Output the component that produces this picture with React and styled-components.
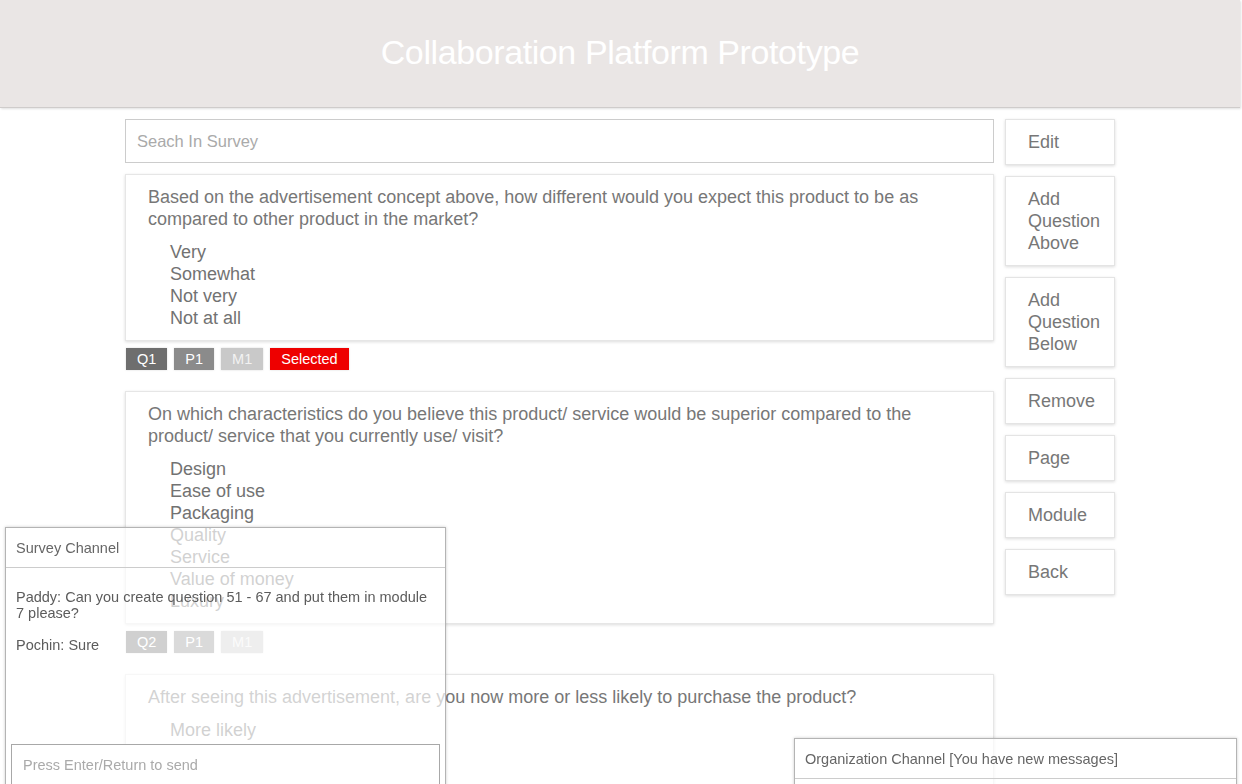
import React from 'react';
import styled, { createGlobalStyle } from 'styled-components';

const GlobalStyle = createGlobalStyle`
  html, body {
    margin: 0;
    padding: 0;
    overflow: hidden;
    background: #ffffff;
  }
  body {
    font-family: "Liberation Sans", Arial, sans-serif;
    color: #777777;
  }
  input::placeholder {
    color: #aaaaaa;
  }
`;

const Page = styled.div`
  width: 1240px;
  min-height: 784px;
`;

const Header = styled.header`
  height: 107px;
  background: #eae6e5;
  border-bottom: 1px solid #cfcccb;
  box-shadow: 1px 1px 2px rgba(0, 0, 0, 0.12);
  display: flex;
  align-items: center;
  justify-content: center;
`;

const Title = styled.h1`
  margin: 0 0 2px;
  font-size: 34px;
  font-weight: normal;
  color: #ffffff;
  letter-spacing: -0.4px;
`;

const Main = styled.main`
  width: 990px;
  margin: 11px auto 0;
  display: flex;
  gap: 11px;
  align-items: flex-start;
`;

const SurveyColumn = styled.div`
  width: 869px;
  display: flex;
  flex-direction: column;
`;

const SearchInput = styled.input`
  box-sizing: border-box;
  height: 44px;
  width: 100%;
  border: 1px solid #cccccc;
  padding: 0 11px;
  font-family: inherit;
  font-size: 16.5px;
  color: #777777;
  outline: none;
  margin-bottom: 11px;
`;

const QuestionCard = styled.section`
  border: 1px solid #e6e6e6;
  box-shadow: 0 1px 3px rgba(0, 0, 0, 0.14);
  padding: 11px 22px 11px;
  background: #ffffff;
`;

const QuestionText = styled.p`
  margin: 0 0 11px;
  font-size: 18px;
  line-height: 22px;
  color: #777777;
`;

const OptionList = styled.ul`
  list-style: none;
  margin: 0;
  padding: 0 0 0 22px;
`;

const Option = styled.li`
  font-size: 18px;
  line-height: 22px;
  color: #727272;
`;

const TagRow = styled.div`
  display: flex;
  gap: 7px;
  margin: 7px 0 21px 1px;
`;

const Tag = styled.span`
  height: 22px;
  line-height: 22px;
  padding: 0 11px;
  font-size: 14.5px;
  color: ${p => p.$light ? '#f2f2f2' : '#ffffff'};
  background: ${p => p.$bg};
  box-shadow: 0 0 2px rgba(0, 0, 0, 0.15);
`;

const ActionColumn = styled.div`
  width: 110px;
  display: flex;
  flex-direction: column;
  gap: 11px;
`;

const ActionButton = styled.button`
  box-sizing: border-box;
  width: 110px;
  border: 1px solid #e4e4e4;
  background: #ffffff;
  box-shadow: 0 1px 3px rgba(0, 0, 0, 0.14);
  padding: 11px 8px 11px 22px;
  text-align: left;
  font-family: inherit;
  font-size: 18px;
  line-height: 22px;
  color: #777777;
  cursor: pointer;
`;

const ChatPanel = styled.div`
  position: fixed;
  z-index: 10;
  box-sizing: border-box;
  display: flex;
  flex-direction: column;
  overflow: hidden;
  background: rgba(255, 255, 255, 0.68);
  border: 1px solid #b4b4b4;
  box-shadow: 0 0 3px rgba(0, 0, 0, 0.2);
  left: ${p => p.$left ?? 'auto'};
  right: ${p => p.$right ?? 'auto'};
  width: ${p => p.$width};
  height: ${p => p.$height};
  bottom: ${p => p.$bottom};
`;

const ChatHeader = styled.div`
  flex: none;
  height: 39px;
  line-height: 41px;
  padding: 0 10px;
  border-bottom: 1px solid #cccccc;
  font-size: 14.5px;
  color: #666666;
`;

const Messages = styled.div`
  flex: 1;
  padding: 21px 10px 0;
  display: flex;
  flex-direction: column;
  gap: 16px;
`;

const Message = styled.p`
  margin: 0;
  font-size: 14.5px;
  line-height: 16px;
  color: #5c5c5c;
`;

const ChatInput = styled.input`
  flex: none;
  box-sizing: border-box;
  height: 45px;
  margin: 0 5px;
  border: 1px solid #a8a8a8;
  background: #ffffff;
  padding: 0 11px 4px;
  font-family: inherit;
  font-size: 14.5px;
  color: #555555;
  outline: none;
`;

const questions = [
  {
    text: 'Based on the advertisement concept above, how different would you expect this product to be as compared to other product in the market?',
    options: ['Very', 'Somewhat', 'Not very', 'Not at all'],
    tags: [['Q1', '#6e6e6e'], ['P1', '#8b8b8b'], ['M1', '#c9c9c9', true], ['Selected', '#ee0000']],
  },
  {
    text: 'On which characteristics do you believe this product/ service would be superior compared to the product/ service that you currently use/ visit?',
    options: ['Design', 'Ease of use', 'Packaging', 'Quality', 'Service', 'Value of money', 'Luxury'],
    tags: [['Q2', '#6e6e6e'], ['P1', '#8b8b8b'], ['M1', '#c9c9c9', true]],
  },
  {
    text: 'After seeing this advertisement, are you now more or less likely to purchase the product?',
    options: ['More likely', 'About the same', 'Less likely'],
    tags: [['Q3', '#6e6e6e'], ['P1', '#8b8b8b'], ['M1', '#c9c9c9', true]],
  },
];

const actions = ['Edit', 'Add Question Above', 'Add Question Below', 'Remove', 'Page', 'Module', 'Back'];

export default function App() {
  return (
    <Page>
      <GlobalStyle />
      <Header>
        <Title>Collaboration Platform Prototype</Title>
      </Header>
      <Main>
        <SurveyColumn>
          <SearchInput placeholder="Seach In Survey" />
          {questions.map((q, i) => (
            <React.Fragment key={i}>
              <QuestionCard>
                <QuestionText>{q.text}</QuestionText>
                <OptionList>
                  {q.options.map(o => <Option key={o}>{o}</Option>)}
                </OptionList>
              </QuestionCard>
              <TagRow>
                {q.tags.map(([label, bg, light]) => (
                  <Tag key={label} $bg={bg} $light={light}>{label}</Tag>
                ))}
              </TagRow>
            </React.Fragment>
          ))}
        </SurveyColumn>
        <ActionColumn>
          {actions.map(a => <ActionButton key={a}>{a}</ActionButton>)}
        </ActionColumn>
      </Main>

      <ChatPanel $left="5px" $width="441px" $height="263px" $bottom="-6px">
        <ChatHeader>Survey Channel</ChatHeader>
        <Messages>
          <Message>Paddy: Can you create question 51 - 67 and put them in module 7 please?</Message>
          <Message>Pochin: Sure</Message>
        </Messages>
        <ChatInput placeholder="Press Enter/Return to send" />
      </ChatPanel>

      <ChatPanel $right="5px" $width="443px" $height="80px" $bottom="-34px">
        <ChatHeader>Organization Channel [You have new messages]</ChatHeader>
      </ChatPanel>
    </Page>
  );
}
